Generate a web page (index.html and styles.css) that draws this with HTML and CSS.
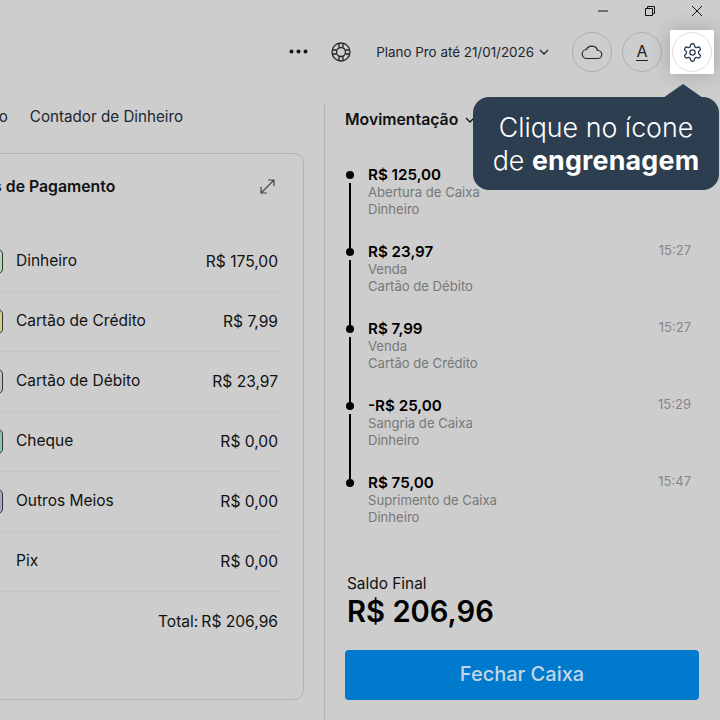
FILE: index.html
```html
<!DOCTYPE html>
<html lang="pt-BR">
<head>
    <meta charset="UTF-8">
    <title>Fechamento de Caixa</title>
    <link rel="stylesheet" href="styles.css">
</head>
<body>
    <div class="app">
        <div class="titlebar">
            <svg class="win-icon" viewBox="0 0 12 12"><path d="M1 6h10"/></svg>
            <svg class="win-icon" viewBox="0 0 12 12"><path d="M1.5 3.5h7v7h-7zM3.5 3.5v-2h7v7h-2"/></svg>
            <svg class="win-icon" viewBox="0 0 12 12"><path d="M1 1l10 10M11 1L1 11"/></svg>
        </div>

        <div class="toolbar">
            <svg class="dots" viewBox="0 0 19 5"><circle cx="2.5" cy="2.5" r="2"/><circle cx="9.5" cy="2.5" r="2"/><circle cx="16.5" cy="2.5" r="2"/></svg>
            <svg class="buoy" viewBox="0 0 20 20"><circle cx="10" cy="10" r="9"/><circle cx="10" cy="10" r="4.5"/><path d="M8 1.2v4.3M12 1.2v4.3M8 14.5v4.3M12 14.5v4.3M1.2 8h4.3M1.2 12h4.3M14.5 8h4.3M14.5 12h4.3"/></svg>
            <div class="plan">Plano Pro até 21/01/2026
                <svg class="chevron" viewBox="0 0 10 6"><path d="M1 1l4 4 4-4"/></svg>
            </div>
            <div class="round-btn">
                <svg class="cloud" viewBox="0 0 22 16"><path d="M16.5 14.5H6a4.5 4.5 0 0 1-.6-9A6 6 0 0 1 16.6 6.5h.4a4 4 0 0 1-.5 8z"/></svg>
            </div>
            <div class="round-btn"><span class="letter">A</span></div>
            <div class="round-btn"></div>
        </div>

        <div class="main">
            <div class="left">
                <div class="tabs">
                    <span>Resumo</span>
                    <span>Contador de Dinheiro</span>
                </div>
                <div class="card">
                    <div class="card-head">
                        <span class="card-title">Formas de Pagamento</span>
                        <svg class="expand" viewBox="0 0 15 15"><path d="M1 14L14 1M8 1h6v6M1 8v6h6"/></svg>
                    </div>
                    <div class="row"><span class="pay-icon green"></span><span class="pay-name">Dinheiro</span><span class="pay-value">R$ 175,00</span></div>
                    <div class="row"><span class="pay-icon yellow"></span><span class="pay-name">Cartão de Crédito</span><span class="pay-value">R$ 7,99</span></div>
                    <div class="row"><span class="pay-icon blue"></span><span class="pay-name">Cartão de Débito</span><span class="pay-value">R$ 23,97</span></div>
                    <div class="row"><span class="pay-icon teal"></span><span class="pay-name">Cheque</span><span class="pay-value">R$ 0,00</span></div>
                    <div class="row"><span class="pay-icon purple"></span><span class="pay-name">Outros Meios</span><span class="pay-value">R$ 0,00</span></div>
                    <div class="row"><span class="pay-icon none"></span><span class="pay-name">Pix</span><span class="pay-value">R$ 0,00</span></div>
                    <div class="total"><span>Total:</span><span>R$ 206,96</span></div>
                </div>
            </div>

            <div class="right">
                <div class="moves-title">Movimentação
                    <svg class="chevron" viewBox="0 0 10 6"><path d="M1 1l4 4 4-4"/></svg>
                </div>
                <div class="timeline">
                    <div class="move">
                        <div class="move-top"><span class="move-value">R$ 125,00</span></div>
                        <div class="move-text">Abertura de Caixa</div>
                        <div class="move-text">Dinheiro</div>
                    </div>
                    <div class="move">
                        <div class="move-top"><span class="move-value">R$ 23,97</span><span class="move-time">15:27</span></div>
                        <div class="move-text">Venda</div>
                        <div class="move-text">Cartão de Débito</div>
                    </div>
                    <div class="move">
                        <div class="move-top"><span class="move-value">R$ 7,99</span><span class="move-time">15:27</span></div>
                        <div class="move-text">Venda</div>
                        <div class="move-text">Cartão de Crédito</div>
                    </div>
                    <div class="move">
                        <div class="move-top"><span class="move-value">-R$ 25,00</span><span class="move-time">15:29</span></div>
                        <div class="move-text">Sangria de Caixa</div>
                        <div class="move-text">Dinheiro</div>
                    </div>
                    <div class="move">
                        <div class="move-top"><span class="move-value">R$ 75,00</span><span class="move-time">15:47</span></div>
                        <div class="move-text">Suprimento de Caixa</div>
                        <div class="move-text">Dinheiro</div>
                    </div>
                </div>
                <div class="balance">
                    <div class="balance-label">Saldo Final</div>
                    <div class="balance-value">R$ 206,96</div>
                </div>
                <div class="close-btn">Fechar Caixa</div>
            </div>
        </div>

        <!-- spotlight do tutorial -->
        <div class="spot">
            <div class="spot-circle">
                <svg class="gear" viewBox="0 0 24 24"><path d="M12.22 2h-.44a2 2 0 0 0-2 2v.18a2 2 0 0 1-1 1.73l-.43.25a2 2 0 0 1-2 0l-.15-.08a2 2 0 0 0-2.73.73l-.22.38a2 2 0 0 0 .73 2.73l.15.1a2 2 0 0 1 1 1.72v.51a2 2 0 0 1-1 1.74l-.15.09a2 2 0 0 0-.73 2.73l.22.38a2 2 0 0 0 2.73.73l.15-.08a2 2 0 0 1 2 0l.43.25a2 2 0 0 1 1 1.73V20a2 2 0 0 0 2 2h.44a2 2 0 0 0 2-2v-.18a2 2 0 0 1 1-1.73l.43-.25a2 2 0 0 1 2 0l.15.08a2 2 0 0 0 2.73-.73l.22-.39a2 2 0 0 0-.73-2.73l-.15-.08a2 2 0 0 1-1-1.74v-.5a2 2 0 0 1 1-1.74l.15-.09a2 2 0 0 0 .73-2.73l-.22-.38a2 2 0 0 0-2.73-.73l-.15.08a2 2 0 0 1-2 0l-.43-.25a2 2 0 0 1-1-1.73V4a2 2 0 0 0-2-2z"/><circle cx="12" cy="12" r="3"/></svg>
            </div>
        </div>
        <div class="tip-arrow"></div>
        <div class="tip">Clique no ícone<br>de <b>engrenagem</b></div>
    </div>
</body>
</html>
```

FILE: styles.css
```css
* {
    margin: 0;
    padding: 0;
    box-sizing: border-box;
}

body {
    font-family: Inter, 'Noto Sans', sans-serif;
    background: #cdcdcd;
    color: #111;
}

svg {
    fill: none;
    stroke: currentColor;
    display: block;
}

.app {
    position: relative;
    width: 720px;
    height: 720px;
    overflow: hidden;
    display: flex;
    flex-direction: column;
}

/* title bar */
.titlebar {
    height: 22px;
    display: flex;
    justify-content: flex-end;
    align-items: center;
    gap: 35px;
    padding-right: 17px;
    flex-shrink: 0;
}

.win-icon {
    width: 12px;
    height: 12px;
    color: #111;
}

/* toolbar */
.toolbar {
    height: 81px;
    display: flex;
    align-items: center;
    justify-content: flex-end;
    padding: 0 8px 22px 0;
    flex-shrink: 0;
}

.dots {
    width: 19px;
    height: 5px;
    fill: #111;
    stroke: none;
    margin-right: 23px;
}

.buoy {
    width: 20px;
    height: 20px;
    stroke-width: 1.3;
    margin-right: 25px;
    color: #222;
}

.plan {
    font-size: 13.4px;
    display: flex;
    align-items: center;
    gap: 5px;
    margin-right: 13px;
    color: #1c2630;
    white-space: nowrap;
}

.chevron {
    width: 10px;
    height: 6px;
    stroke-width: 1.3;
}

.round-btn {
    width: 40px;
    height: 40px;
    border-radius: 50%;
    border: 1px solid #aeaeae;
    margin-left: 10px;
    display: flex;
    align-items: center;
    justify-content: center;
    flex-shrink: 0;
}

.cloud {
    width: 22px;
    height: 16px;
    stroke-width: 1.2;
    color: #222;
}

.letter {
    font-size: 16px;
    line-height: 17px;
    color: #222;
    border-bottom: 1.5px solid #222;
}

/* main */
.main {
    flex: 1;
    display: flex;
    min-height: 0;
}

.left {
    width: 325px;
    border-right: 1px solid #b4b4b4;
    padding: 0 20px 20px 0;
    display: flex;
    flex-direction: column;
    flex-shrink: 0;
}

.tabs {
    display: flex;
    gap: 22px;
    font-size: 15.2px;
    line-height: 26px;
    padding-top: 1px;
    margin-left: -50px;
    white-space: nowrap;
    color: #1c2630;
}

.card {
    flex: 1;
    margin-top: 23px;
    margin-left: -60px;
    border: 1px solid #b4b4b4;
    border-radius: 10px;
    padding: 0 24px 0 60px;
}

.card-head {
    height: 64px;
    display: flex;
    align-items: center;
    justify-content: space-between;
    margin-bottom: 14px;
    padding-right: 4px;
}

.card-title {
    font-size: 15.8px;
    font-weight: 600;
    margin-left: -56px;
    white-space: nowrap;
}

.expand {
    width: 15px;
    height: 15px;
    color: #444;
    stroke-width: 1.2;
}

.row {
    height: 60px;
    border-bottom: 1px solid #c3c3c3;
    display: flex;
    align-items: center;
    gap: 13px;
    margin-left: -24px;
    margin-right: -2px;
    padding-right: 3px;
    font-size: 15.5px;
}

.pay-icon {
    width: 26px;
    height: 25px;
    border: 1px solid #333;
    border-radius: 5px;
    flex-shrink: 0;
}

.pay-icon.green { background: #b4d8b8; }
.pay-icon.yellow { background: #d6d08c; }
.pay-icon.blue { background: #bcc4d0; }
.pay-icon.teal { background: #8cc4ba; }
.pay-icon.purple { background: #aca8c8; }
.pay-icon.none { border: none; }

.pay-name {
    flex: 1;
    margin-top: -2px;
}

.pay-value {
    font-size: 15.6px;
}

.total {
    height: 58px;
    display: flex;
    align-items: center;
    justify-content: flex-end;
    gap: 3px;
    padding-right: 1px;
    font-size: 15.6px;
}

/* right */
.right {
    flex: 1;
    padding: 0 21px 20px 20px;
    display: flex;
    flex-direction: column;
    min-width: 0;
}

.moves-title {
    display: flex;
    align-items: center;
    gap: 7px;
    font-size: 15.8px;
    font-weight: 600;
    line-height: 32px;
    padding-top: 1px;
}

.timeline {
    margin-top: 29px;
    flex: 1;
}

.move {
    position: relative;
    height: 77px;
    padding-left: 23px;
    padding-right: 8px;
}

.move::before {
    content: "";
    position: absolute;
    left: 1px;
    top: 6px;
    width: 8px;
    height: 8px;
    border-radius: 50%;
    background: #000;
}

.move::after {
    content: "";
    position: absolute;
    left: 4px;
    top: 18px;
    width: 2px;
    height: 65px;
    background: #000;
}

.move:last-child::after {
    display: none;
}

.move-top {
    display: flex;
    justify-content: space-between;
    height: 19px;
}

.move-value {
    font-size: 15.2px;
    font-weight: 600;
    line-height: 20px;
    color: #000;
}

.move-time {
    font-size: 13px;
    line-height: 16px;
    color: #868686;
}

.move-text {
    font-size: 13.1px;
    line-height: 17px;
    color: #777;
}

.balance {
    padding-left: 2px;
    margin-bottom: 20px;
}

.balance-label {
    font-size: 15.4px;
    line-height: 19px;
}

.balance-value {
    font-size: 29.2px;
    font-weight: 600;
    line-height: 37px;
    color: #000;
}

.close-btn {
    height: 50px;
    background: #007acc;
    border-radius: 4px;
    color: #c4d6e4;
    font-size: 20px;
    font-weight: 500;
    padding-bottom: 2px;
    display: flex;
    align-items: center;
    justify-content: center;
}

/* overlay */
.spot {
    position: absolute;
    left: 670px;
    top: 30px;
    width: 44px;
    height: 44px;
    background: #fff;
    box-shadow: 0 0 20px rgba(0, 0, 0, 0.2);
    display: flex;
    align-items: center;
    justify-content: center;
}

.spot-circle {
    width: 40px;
    height: 40px;
    border-radius: 50%;
    border: 1px solid #ddd;
    display: flex;
    align-items: center;
    justify-content: center;
}

.gear {
    width: 21px;
    height: 21px;
    color: #2d3e50;
    stroke-width: 1.5;
}

.tip {
    position: absolute;
    left: 473px;
    top: 97px;
    width: 246px;
    height: 93px;
    border-radius: 16px;
    background: #2d3e50;
    color: #fff;
    font-size: 26.8px;
    line-height: 33px;
    text-align: center;
    padding-top: 14px;
    font-weight: 300;
}

.tip b {
    font-weight: 700;
    letter-spacing: 0.2px;
}

.tip-arrow {
    position: absolute;
    left: 663px;
    top: 84px;
    width: 40px;
    height: 14px;
    background: #2d3e50;
    clip-path: polygon(50% 0, 100% 100%, 0 100%);
}
```
